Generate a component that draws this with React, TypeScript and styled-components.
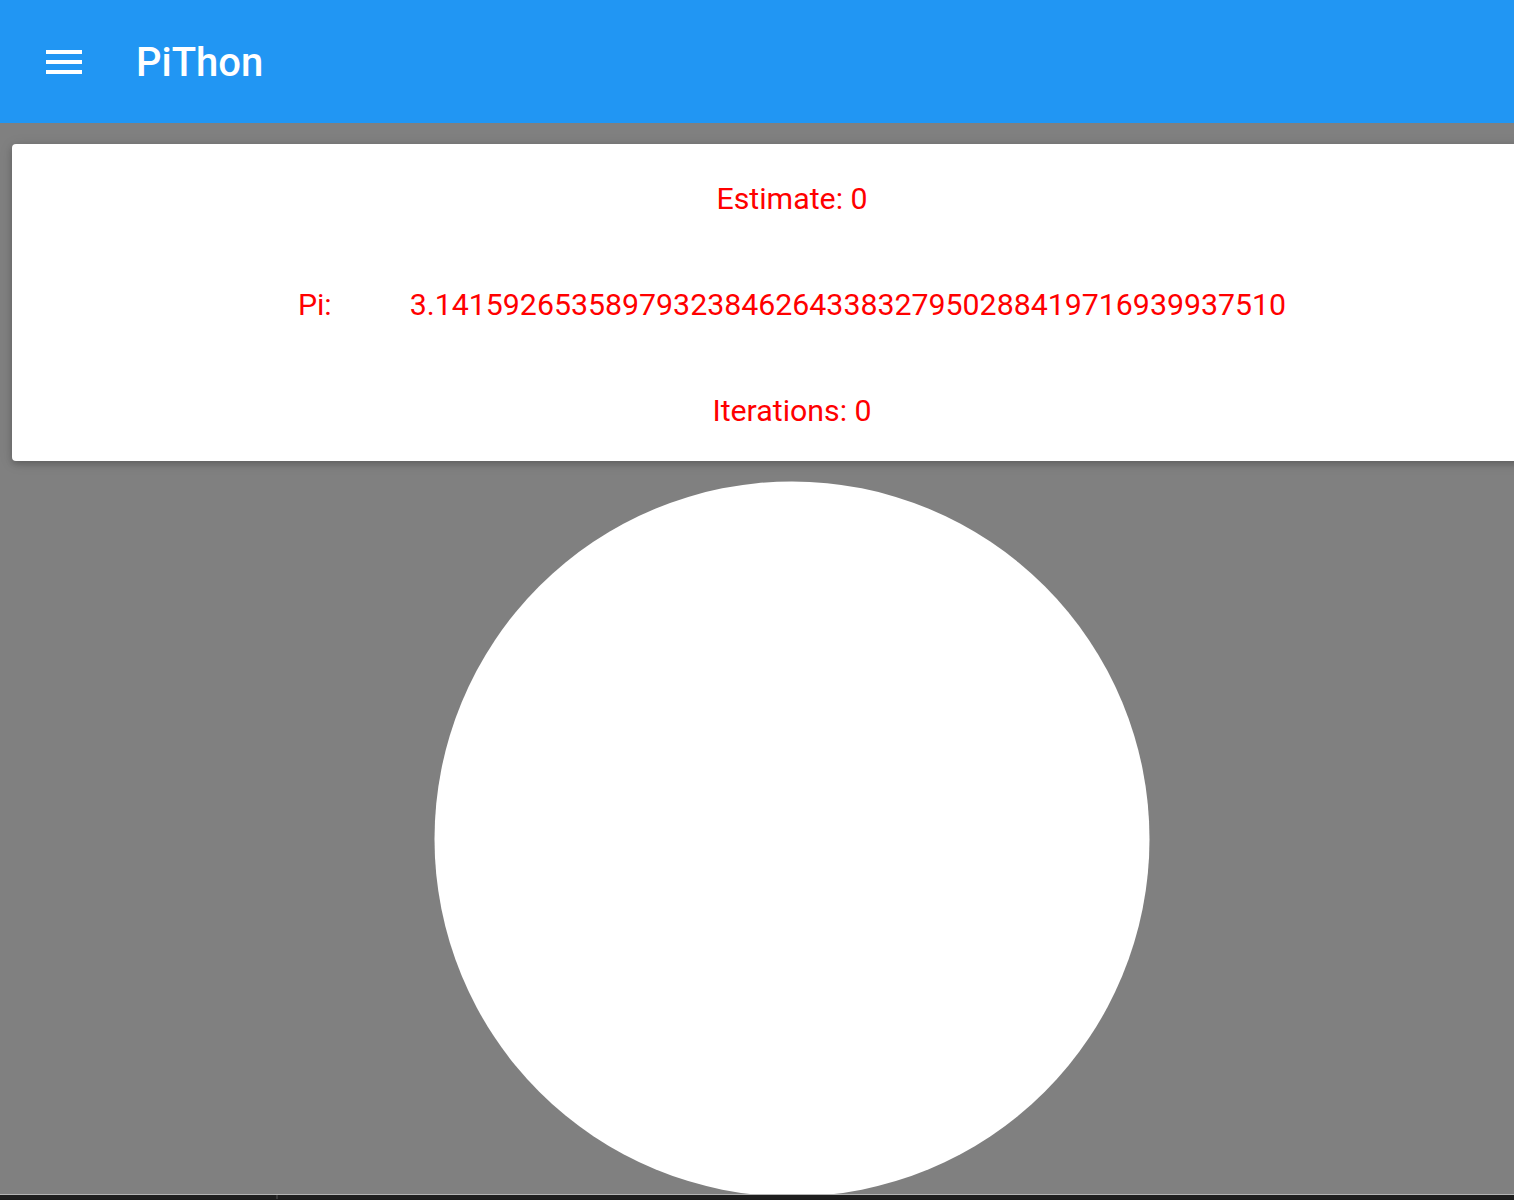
import React from "react";
import styled, { createGlobalStyle } from "styled-components";

const GlobalStyle = createGlobalStyle`
  html, body {
    margin: 0;
    padding: 0;
    height: 1200px;
    overflow: hidden;
    background: #808080;
    font-family: Roboto, "Noto Sans", "Liberation Sans", sans-serif;
  }
  #root { height: 1200px; }
`;

const Page = styled.div`
  width: 1584px;
  height: 1200px;
  display: flex;
  flex-direction: column;
  background: #808080;
`;

const AppBar = styled.header`
  height: 123px;
  flex: none;
  background: #2196f3;
  display: flex;
  align-items: center;
  padding-left: 40px;
  gap: 48px;
  box-sizing: border-box;
`;

const MenuButton = styled.button`
  width: 48px;
  height: 48px;
  padding: 0;
  border: 0;
  background: transparent;
  display: flex;
  align-items: center;
  justify-content: center;
  margin-top: 1px;
`;

const Title = styled.h1`
  margin: 0;
  color: #ffffff;
  font-size: 40px;
  font-weight: 500;
  letter-spacing: 0;
  line-height: 1;
  margin-top: 2px;
`;

const Main = styled.main`
  flex: 1;
  display: flex;
  flex-direction: column;
  align-items: center;
  padding: 21px 12px 0;
  gap: 20px;
  box-sizing: border-box;
  min-height: 0;
`;

const Card = styled.section`
  align-self: stretch;
  background: #ffffff;
  border-radius: 4px;
  box-shadow: 0 3px 6px rgba(0, 0, 0, 0.18), 0 2px 14px rgba(0, 0, 0, 0.12);
  display: flex;
  flex-direction: column;
  height: 317px;
`;

const Row = styled.div`
  flex: 1;
  display: flex;
  align-items: center;
  justify-content: center;
  gap: 78px;
  color: #ff0000;
  font-size: 30.3px;
  line-height: 1;
  padding-top: 5px;
`;

const Label = styled.span``;
const Value = styled.span``;

const Circle = styled.svg`
  flex: none;
  display: block;
`;

const ScrollBar = styled.div`
  position: fixed;
  left: 0;
  right: 0;
  bottom: 0;
  height: 4px;
  border-top: 1px solid #b4b4b4;
  border-bottom: 1px solid #1c1c1c;
  background: #1e1e1e;
`;

const ScrollThumbMark = styled.div`
  position: absolute;
  left: 276px;
  top: 0;
  width: 2px;
  height: 100%;
  background: #3a3a3a;
`;

export default function App() {
  return (
    <>
      <GlobalStyle />
      <Page>
        <AppBar>
          <MenuButton aria-label="menu">
            <svg width="48" height="48" viewBox="0 0 24 24" fill="#ffffff">
              <path d="M3 18h18v-2H3v2zm0-5h18v-2H3v2zm0-7v2h18V6H3z" />
            </svg>
          </MenuButton>
          <Title>PiThon</Title>
        </AppBar>
        <Main>
          <Card>
            <Row>Estimate: 0</Row>
            <Row>
              <Label>Pi:</Label>
              <Value>3.14159265358979323846264338327950288419716939937510</Value>
            </Row>
            <Row>Iterations: 0</Row>
          </Card>
          <Circle width="716" height="716" viewBox="0 0 716 716">
            <circle cx="358" cy="358" r="357.5" fill="#ffffff" />
          </Circle>
        </Main>
      </Page>
      <ScrollBar>
        <ScrollThumbMark />
      </ScrollBar>
    </>
  );
}
